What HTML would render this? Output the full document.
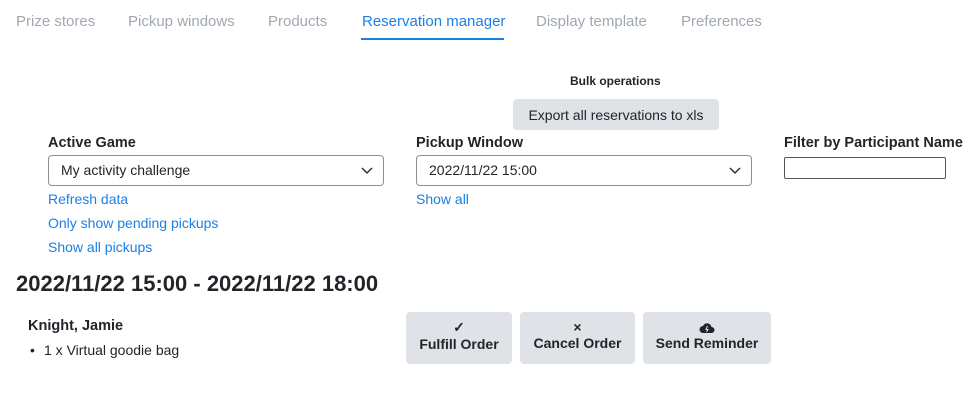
<!DOCTYPE html>
<html><head><style>
body{margin:0;width:977px;height:402px;background:#fff;font-family:"Liberation Sans",sans-serif;position:relative;overflow:hidden;color:#212529}
.a{position:absolute;white-space:nowrap}
.tab{font-size:15px;color:#a0a8b1;top:13px}
.lbl{font-size:14.5px;font-weight:bold}
.lnk{font-size:14px;color:#1a7fe8}
.sel{position:absolute;border:1px solid #8a8f94;border-radius:4px;height:31px;box-sizing:border-box;font-size:14px;line-height:29px;padding-left:12px;background:#fff}
.sel svg{position:absolute;right:10px;top:11px}
.btn{position:absolute;background:#dfe2e6;border-radius:4px;font-size:14px;font-weight:bold;text-align:center;color:#212529}
</style></head><body>
<div class="a tab" style="left:16px">Prize stores</div>
<div class="a tab" style="left:128px">Pickup windows</div>
<div class="a tab" style="left:268px">Products</div>
<div class="a tab" style="left:362px;color:#1a7fe8">Reservation manager</div>
<div class="a" style="left:361px;top:38px;width:143px;height:2px;background:#1a7fe8"></div>
<div class="a tab" style="left:536px">Display template</div>
<div class="a tab" style="left:681px">Preferences</div>

<div class="a" style="left:570px;top:74px;font-size:12px;font-weight:bold">Bulk operations</div>
<div class="btn" style="left:513px;top:99px;width:206px;height:31px;line-height:32px;font-weight:normal">Export all reservations to xls</div>

<div class="a lbl" style="left:48px;top:135px">Active Game</div>
<div class="sel" style="left:48px;top:155px;width:336px">My activity challenge<svg width="12" height="8" viewBox="0 0 12 8"><path d="M1 1l5 5 5-5" fill="none" stroke="#333" stroke-width="1.5"/></svg></div>
<div class="a lbl" style="left:416px;top:135px">Pickup Window</div>
<div class="sel" style="left:416px;top:155px;width:336px">2022/11/22 15:00<svg width="12" height="8" viewBox="0 0 12 8"><path d="M1 1l5 5 5-5" fill="none" stroke="#333" stroke-width="1.5"/></svg></div>
<div class="a lbl" style="left:784px;top:135px">Filter by Participant Name</div>
<div class="a" style="left:784px;top:157px;width:160px;height:20px;border:1px solid #555;border-radius:2px"></div>

<div class="a lnk" style="left:48px;top:191px">Refresh data</div>
<div class="a lnk" style="left:48px;top:215px">Only show pending pickups</div>
<div class="a lnk" style="left:48px;top:239px">Show all pickups</div>
<div class="a lnk" style="left:416px;top:191px">Show all</div>

<div class="a" style="left:16px;top:271px;font-size:22px;font-weight:bold">2022/11/22 15:00 - 2022/11/22 18:00</div>
<div class="a lbl" style="left:28px;top:318px">Knight, Jamie</div>
<div class="a" style="left:30px;top:342px;font-size:14px">•</div>
<div class="a" style="left:44px;top:342px;font-size:14px">1 x Virtual goodie bag</div>

<div class="btn" style="left:406px;top:312px;width:106px;height:52px"><div style="margin-top:7px;font-size:14px">✓</div><div>Fulfill Order</div></div>
<div class="btn" style="left:520px;top:312px;width:115px;height:52px"><div style="margin-top:7px;font-size:14px">×</div><div>Cancel Order</div></div>
<div class="btn" style="left:643px;top:312px;width:128px;height:52px"><div style="margin-top:9px;height:14px"><svg width="16" height="12" viewBox="0 0 16 12"><path d="M4 11a3.5 3.5 0 010-7 4.5 4.5 0 018.5 1A3 3 0 0112.5 11z" fill="#212529"/><path d="M8.5 4L7 7.5h2L7.5 10" fill="none" stroke="#dfe2e6" stroke-width="1"/></svg></div><div>Send Reminder</div></div>
</body></html>
